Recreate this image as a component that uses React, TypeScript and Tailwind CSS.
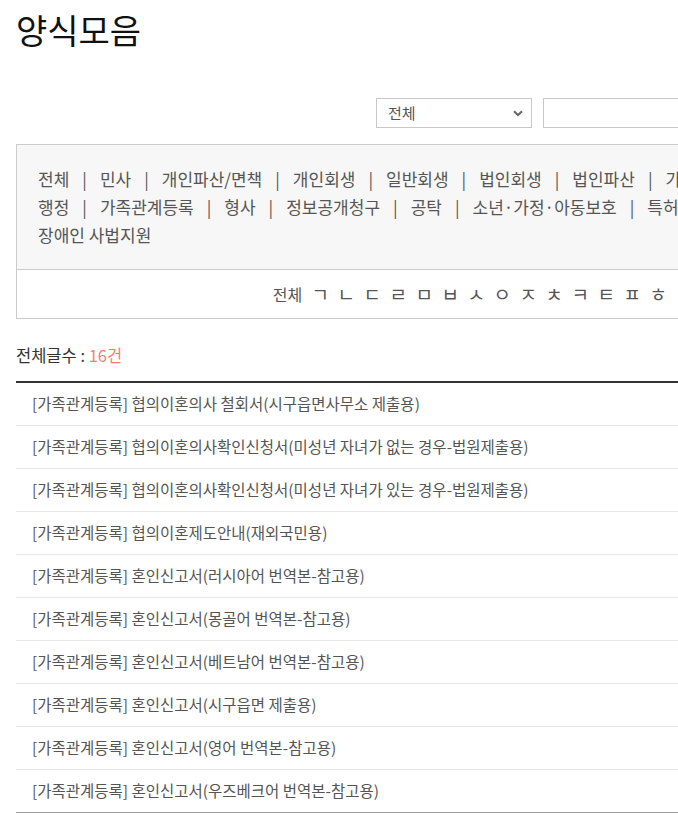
import React from 'react';

const font = { fontFamily: '"Noto Sans CJK KR", "Noto Sans", sans-serif' };

const categoryRows: string[][] = [
  ['전체', '민사', '개인파산/면책', '개인회생', '일반회생', '법인회생', '법인파산', '가사', '비송'],
  ['행정', '가족관계등록', '형사', '정보공개청구', '공탁', '소년·가정·아동보호', '특허', '기타'],
  ['장애인 사법지원'],
];

const consonants = ['ㄱ', 'ㄴ', 'ㄷ', 'ㄹ', 'ㅁ', 'ㅂ', 'ㅅ', 'ㅇ', 'ㅈ', 'ㅊ', 'ㅋ', 'ㅌ', 'ㅍ', 'ㅎ'];

const forms = [
  '[가족관계등록] 협의이혼의사 철회서(시구읍면사무소 제출용)',
  '[가족관계등록] 협의이혼의사확인신청서(미성년 자녀가 없는 경우-법원제출용)',
  '[가족관계등록] 협의이혼의사확인신청서(미성년 자녀가 있는 경우-법원제출용)',
  '[가족관계등록] 협의이혼제도안내(재외국민용)',
  '[가족관계등록] 혼인신고서(러시아어 번역본-참고용)',
  '[가족관계등록] 혼인신고서(몽골어 번역본-참고용)',
  '[가족관계등록] 혼인신고서(베트남어 번역본-참고용)',
  '[가족관계등록] 혼인신고서(시구읍면 제출용)',
  '[가족관계등록] 혼인신고서(영어 번역본-참고용)',
  '[가족관계등록] 혼인신고서(우즈베크어 번역본-참고용)',
];

export default function App() {
  return (
    <div className="w-full h-[818px] overflow-hidden bg-white" style={font}>
      <div className="w-[944px] px-4 pt-[9px]">
        <h1 className="text-[34px] leading-[42px] font-normal text-[#111]">양식모음</h1>

        {/* search */}
        <div className="mt-[47px] flex justify-end gap-[11px] h-[30px]">
          <div className="relative w-[156px] h-[30px] border border-[#c8c8c8] bg-white flex items-center pl-[11px] text-[15px] text-[#555]">
            전체
            <svg className="absolute right-[8px] top-[11px]" width="10" height="7" viewBox="0 0 10 7">
              <path d="M1 1.2 L5 5 L9 1.2" fill="none" stroke="#666" strokeWidth="2" />
            </svg>
          </div>
          <div className="w-[300px] h-[30px] border border-[#c8c8c8] bg-white" />
          <div className="w-[74px] h-[30px] bg-[#555] text-white text-[14px] flex items-center justify-center">검색</div>
        </div>

        {/* categories */}
        <div className="mt-[16px] border border-[#cccccc]">
          <div className="bg-[#f7f7f7] pl-[21px] py-[20px] border-b border-[#cccccc]">
            {categoryRows.map((row, i) => (
              <div key={i} className="flex whitespace-nowrap text-[17px] leading-[28px] text-[#555]">
                {row.map((c, j) => (
                  <React.Fragment key={c}>
                    <span>{c}</span>
                    {(j < row.length - 1 || i < 2) && <span className="mx-[13px] text-[#555]">|</span>}
                  </React.Fragment>
                ))}
              </div>
            ))}
          </div>
          <div className="h-[48px] flex items-center justify-center text-[#555]">
            <span className="text-[16px] mr-[5px]">전체</span>
            {consonants.map((c) => (
              <span key={c} className="w-[26px] text-center text-[19px] leading-[24px]">{c}</span>
            ))}
          </div>
        </div>

        {/* count */}
        <div className="mt-[26px] text-[16.5px] leading-[20px] text-[#333]">
          전체글수 : <span className="text-[#f27f72]">16건</span>
        </div>

        {/* list */}
        <ul className="mt-[16px] border-t-2 border-[#333]">
          {forms.map((f, i) => (
            <li
              key={i}
              className={`h-[43px] flex items-center px-4 text-[15.5px] text-[#555] border-b ${
                i === forms.length - 1 ? 'border-[#999]' : 'border-[#e6e6e6]'
              }`}
            >
              {f}
            </li>
          ))}
        </ul>
      </div>
    </div>
  );
}
